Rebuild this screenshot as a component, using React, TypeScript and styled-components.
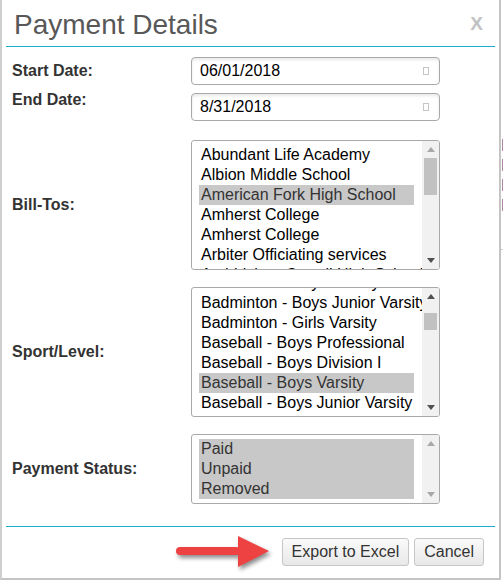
import React from "react"
import styled, { createGlobalStyle } from "styled-components"

const GlobalStyle = createGlobalStyle`
  html, body {
    margin: 0;
    padding: 0;
    background: #fff;
    font-family: "Liberation Sans", Arial, sans-serif;
  }
`

const Page = styled.div`
  display: flex;
  width: 503px;
  height: 581px;
  overflow: hidden;
`

const Dialog = styled.div`
  flex: none;
  width: 501px;
  height: 580px;
  box-sizing: border-box;
  border-left: 2px solid #cfcfcf;
  border-right: 2px solid #c4c4c4;
  border-bottom: 2px solid #c4c4c4;
  background: #fff;
  display: flex;
  flex-direction: column;
`

const Side = styled.div`
  flex: 1;
  overflow: hidden;
  padding-top: 136px;
  font-size: 16px;
  line-height: 20px;
  color: #2d5fa6;
  white-space: nowrap;
`

const SideRule = styled.div`
  margin-top: 33px;
  border-top: 1px solid #ccc;
`

const Header = styled.div`
  display: flex;
  align-items: center;
  justify-content: space-between;
  margin: 0 4px;
  padding: 9px 12px 5px 8px;
  border-bottom: 1px solid #1badcb;
`

const Title = styled.h1`
  margin: 0;
  font-size: 28px;
  line-height: 32px;
  font-weight: normal;
  color: #585858;
`

const Close = styled.span`
  font-size: 19px;
  font-weight: bold;
  color: #c2c2c2;
  margin: -2px 0 0 0;
`

const Form = styled.div`
  padding: 10px 0 0 10px;
  display: flex;
  flex-direction: column;
`

const Row = styled.div<{ $mt: number }>`
  display: grid;
  grid-template-columns: 179px 249px;
  align-items: center;
  margin-top: ${p => p.$mt}px;
`

const Label = styled.label<{ $top?: boolean }>`
  font-size: 16px;
  font-weight: bold;
  color: #333;
  align-self: ${p => (p.$top ? "start" : "center")};
  margin-top: ${p => (p.$top ? "-2px" : "0")};
`

const DateBox = styled.div`
  display: flex;
  align-items: center;
  justify-content: space-between;
  height: 28px;
  box-sizing: border-box;
  padding: 0 10px 0 8px;
  border: 1px solid #a9a9a9;
  border-radius: 4px;
  box-shadow: inset 0 2px 3px rgba(0, 0, 0, 0.09);
  font-size: 16px;
  color: #000;
`

const CalGlyph = styled.span`
  width: 6px;
  height: 8px;
  box-sizing: border-box;
  border: 1px solid #c6c6c6;
`

const ListBox = styled.div<{ $h: number }>`
  display: flex;
  height: ${p => p.$h}px;
  box-sizing: border-box;
  border: 1px solid #a9a9a9;
  border-radius: 3px;
  overflow: hidden;
`

const Items = styled.div`
  flex: 1;
  overflow: hidden;
  padding: 4px 0 0 7px;
`

const ItemStack = styled.div<{ $offset: number }>`
  margin-top: ${p => -p.$offset}px;
`

const Option = styled.div<{ $sel: boolean }>`
  width: 215px;
  box-sizing: border-box;
  height: 20px;
  line-height: 20px;
  padding: 0 2px;
  font-size: 16px;
  white-space: nowrap;
  color: ${p => (p.$sel ? "#333" : "#000")};
  background: ${p => (p.$sel ? "#c8c8c8" : "transparent")};
`

const Scrollbar = styled.div`
  flex: none;
  width: 17px;
  background: #f1f1f1;
  display: flex;
  flex-direction: column;
`

const ArrowBtn = styled.div`
  height: 17px;
  display: flex;
  align-items: center;
  justify-content: center;
  flex: none;
`

const Track = styled.div`
  flex: 1;
`

const Thumb = styled.div<{ $top: number; $h: number }>`
  margin: ${p => p.$top}px 2px 0 2px;
  height: ${p => p.$h}px;
  background: #c1c1c1;
`

const Footer = styled.div`
  margin: 22px 4px 0 4px;
  padding: 11px 11px 0 0;
  border-top: 1px solid #1badcb;
  display: flex;
  justify-content: flex-end;
  align-items: center;
  gap: 5px;
`

const Pointer = styled.svg`
  margin-right: 8px;
  overflow: visible;
  filter: drop-shadow(2px 3px 2px rgba(0, 0, 0, 0.45));
`

const Button = styled.button`
  height: 28px;
  padding: 0 9px;
  font-family: "Liberation Sans", Arial, sans-serif;
  font-size: 16px;
  color: #333;
  border: 1px solid #c6c6c6;
  border-radius: 3px;
  background: linear-gradient(#fafafa, #e8e8e8);
`

const Tri = ({ up, dark }: { up: boolean; dark: boolean }) => (
  <svg width="8" height="5" viewBox="0 0 8 5">
    <polygon
      points={up ? "0,5 8,5 4,0" : "0,0 8,0 4,5"}
      fill={dark ? "#505050" : "#a8a8a8"}
    />
  </svg>
)

interface ListProps {
  items: string[]
  selected: number[]
  height: number
  offset?: number
  thumb?: { top: number; h: number }
  upDark: boolean
  downDark: boolean
}

const List: React.FC<ListProps> = ({ items, selected, height, offset = 0, thumb, upDark, downDark }) => (
  <ListBox $h={height}>
    <Items>
      <ItemStack $offset={offset}>
        {items.map((t, i) => (
          <Option key={i} $sel={selected.includes(i)}>{t}</Option>
        ))}
      </ItemStack>
    </Items>
    <Scrollbar>
      <ArrowBtn><Tri up dark={upDark} /></ArrowBtn>
      <Track>{thumb && <Thumb $top={thumb.top} $h={thumb.h} />}</Track>
      <ArrowBtn><Tri up={false} dark={downDark} /></ArrowBtn>
    </Scrollbar>
  </ListBox>
)

const billTos = [
  "Abundant Life Academy",
  "Albion Middle School",
  "American Fork High School",
  "Amherst College",
  "Amherst College",
  "Arbiter Officiating services",
  "Archbishop Carroll High School",
]

const sports = [
  "Badminton - Boys Varsity",
  "Badminton - Boys Junior Varsity",
  "Badminton - Girls Varsity",
  "Baseball - Boys Professional",
  "Baseball - Boys Division I",
  "Baseball - Boys Varsity",
  "Baseball - Boys Junior Varsity",
]

export default function App() {
  return (
    <>
      <GlobalStyle />
      <Page>
        <Dialog>
          <Header>
            <Title>Payment Details</Title>
            <Close>X</Close>
          </Header>
          <Form>
            <Row $mt={0}>
              <Label>Start Date:</Label>
              <DateBox>06/01/2018<CalGlyph /></DateBox>
            </Row>
            <Row $mt={8}>
              <Label $top>End Date:</Label>
              <DateBox>8/31/2018<CalGlyph /></DateBox>
            </Row>
            <Row $mt={19}>
              <Label>Bill-Tos:</Label>
              <List items={billTos} selected={[2]} height={130} thumb={{ top: 0, h: 37 }} upDark={false} downDark />
            </Row>
            <Row $mt={17}>
              <Label>Sport/Level:</Label>
              <List items={sports} selected={[5]} height={130} offset={19} thumb={{ top: 8, h: 17 }} upDark downDark />
            </Row>
            <Row $mt={17}>
              <Label>Payment Status:</Label>
              <List items={["Paid", "Unpaid", "Removed"]} selected={[0, 1, 2]} height={70} upDark={false} downDark={false} />
            </Row>
          </Form>
          <Footer>
            <Pointer width="100" height="28" viewBox="0 6 100 28">
              <rect x="7" y="15" width="64" height="8" rx="4" fill="#ee4242" />
              <polygon points="69,4 100,19 69,35" fill="#ee4242" />
            </Pointer>
            <Button>Export to Excel</Button>
            <Button>Cancel</Button>
          </Footer>
        </Dialog>
        <Side>
          <div>F</div>
          <div>F</div>
          <div>F</div>
          <div>F</div>
          <SideRule />
        </Side>
      </Page>
    </>
  )
}
